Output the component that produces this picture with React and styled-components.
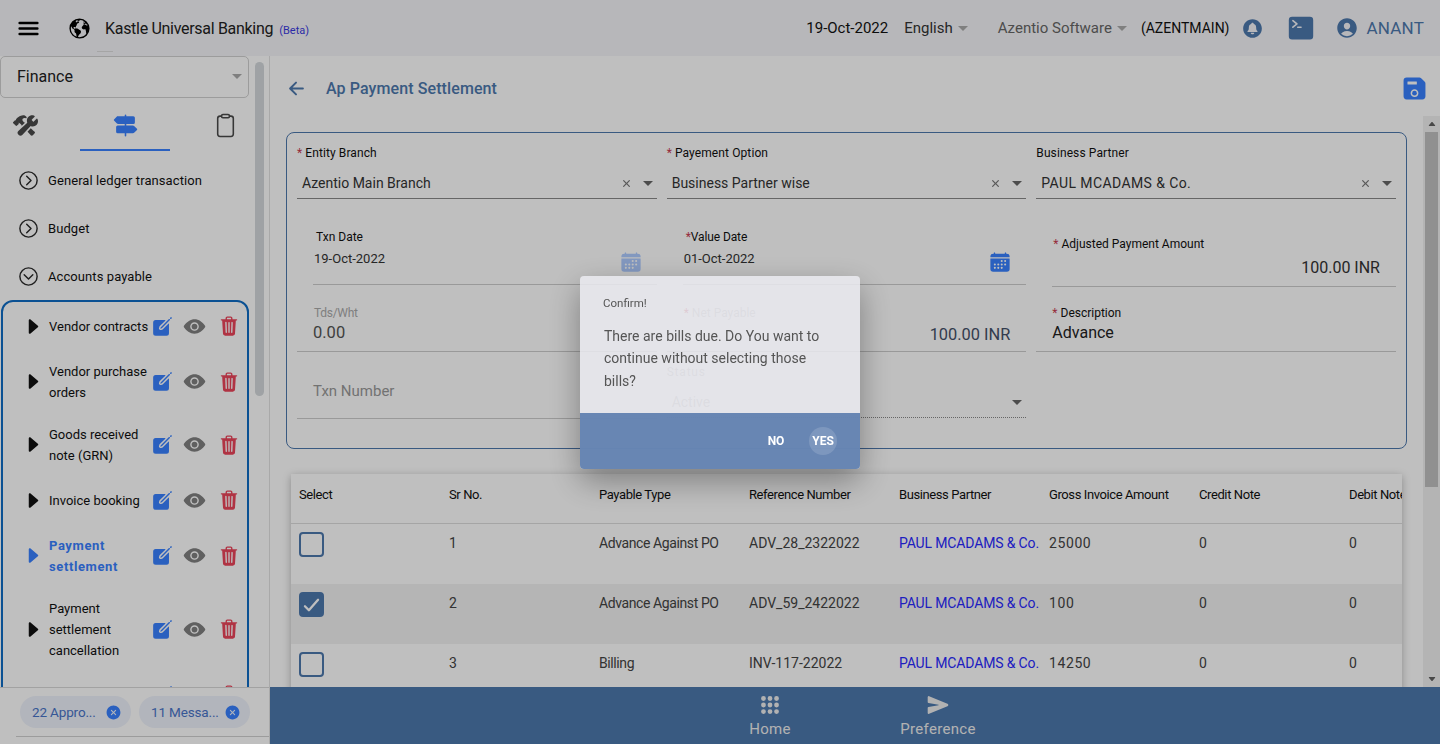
import React from "react";
import styled, { createGlobalStyle } from "styled-components";
import {
  IoMenu,
  IoEarth,
  IoNotificationsCircle,
  IoTerminal,
  IoPersonCircle,
  IoArrowBack,
  IoSave,
  IoCalendar,
  IoConstruct,
  IoTrailSign,
  IoClipboardOutline,
  IoChevronForwardCircleOutline,
  IoChevronDownCircleOutline,
  IoCaretForward,
  IoCaretDown,
  IoCaretUp,
  IoCreate,
  IoEye,
  IoTrash,
  IoCloseCircle,
  IoClose,
  IoApps,
  IoSend,
  IoCheckmark,
} from "react-icons/io5";

const blue = "#4d78ad";
const primary = "#3880ff";

const GlobalStyle = createGlobalStyle`
  html, body {
    margin: 0;
    height: 100%;
    overflow: hidden;
    background: #fff;
    font-family: Roboto, "Liberation Sans", sans-serif;
    color: #000;
  }
  * {
    box-sizing: border-box;
  }
`;

const Page = styled.div`
  height: 744px;
  display: flex;
  flex-direction: column;
  overflow: hidden;
`;

const Header = styled.header`
  position: relative;
  flex: 0 0 56px;
  display: flex;
  align-items: center;
  background: #f5f5f8;
  padding: 0 16px 0 14.5px;
`;

const HeaderTick = styled.span`
  position: absolute;
  left: 97px;
  top: 51px;
  width: 16px;
  height: 1px;
  background: #ddd;
`;

const Title = styled.span`
  margin-left: 14.5px;
  font-size: 16px;
  letter-spacing: -0.3px;
  color: #222;
`;

const Beta = styled.span`
  margin-left: 6px;
  font-size: 11px;
  letter-spacing: 0;
  color: #3a3ae0;
`;

const Spacer = styled.div`
  flex: 1;
`;

const HeadText = styled.span`
  margin-left: ${(p) => p.$ml || 0}px;
  font-size: ${(p) => p.$size || 14}px;
  color: ${(p) => p.$color || "#111"};
  letter-spacing: ${(p) => p.$track || 0}px;
`;

const HeadIcon = styled.span`
  display: flex;
  margin-left: ${(p) => p.$ml || 0}px;
  color: ${(p) => p.$color || "#000"};
  font-size: ${(p) => p.$size || 22}px;
`;

const Caret = styled.span`
  margin-left: ${(p) => p.$ml || 5}px;
  width: 0;
  height: 0;
  border-left: 5px solid transparent;
  border-right: 5px solid transparent;
  border-top: 5px solid #aaa;
`;

const Body = styled.div`
  flex: 1;
  min-height: 0;
  display: flex;
`;

const Sidebar = styled.aside`
  flex: 0 0 270px;
  display: flex;
  flex-direction: column;
  border-right: 1px solid #e2e2e2;
  background: #fff;
`;

const SideScroll = styled.div`
  flex: 1;
  min-height: 0;
  overflow: hidden;
  display: flex;
`;

const SideColumn = styled.div`
  flex: 0 0 250px;
  width: 250px;
`;

const SideThumbTrack = styled.div`
  padding: 6px 0 0 5px;
`;

const SideThumb = styled.div`
  width: 9px;
  height: 334px;
  border-radius: 5px;
  background: #d4d9dc;
`;

const ModuleSelect = styled.div`
  height: 42px;
  width: 249px;
  display: flex;
  align-items: center;
  justify-content: space-between;
  padding: 0 6px 2px 16px;
  border: 1px solid #d0d0d0;
  border-radius: 5px;
  font-size: 16px;
  color: #222;
`;

const Tabs = styled.div`
  display: grid;
  grid-template-columns: 50px 90px 50px;
  justify-content: space-between;
  height: 53px;
`;

const Tab = styled.div`
  display: flex;
  align-items: center;
  justify-content: center;
  font-size: 25px;
  padding-top: 4px;
  color: ${(p) => (p.$active ? primary : "#4a4a4a")};
  border-bottom: 2px solid ${(p) => (p.$active ? primary : "transparent")};
`;

const Group = styled.div`
  display: flex;
  align-items: center;
  gap: 8px;
  height: 48px;
  padding-left: 17px;
  font-size: 13px;
  letter-spacing: 0.08px;
  color: #111;

  svg {
    font-size: 23px;
    flex: none;
    color: #2a2a2a;
  }
`;

const GroupList = styled.div`
  margin-top: 5px;
`;

const SubBox = styled.div`
  margin: 0 1px;
  border: 2px solid #0f6cc4;
  border-radius: 12px;
`;

const Item = styled.div`
  display: flex;
  align-items: center;
  min-height: 48px;
  padding: 10.5px 0 10.5px 19px;
`;

const ItemCaret = styled.span`
  display: flex;
  font-size: 23px;
  color: ${(p) => (p.$active ? primary : "#111")};
`;

const ItemName = styled.div`
  flex: 0 0 102px;
  width: 102px;
  margin-left: 4px;
  font-size: 13px;
  line-height: 21px;
  font-weight: ${(p) => (p.$active ? 700 : 400)};
  letter-spacing: ${(p) => (p.$active ? 0.6 : 0)}px;
  color: ${(p) => (p.$active ? primary : "#111")};
  white-space: pre;
`;

const ItemActions = styled.div`
  display: flex;
  align-items: center;
`;

const ActionIcon = styled.span`
  display: flex;
  margin-left: ${(p) => p.$ml || 0}px;
  color: ${(p) => p.$color};
  font-size: ${(p) => p.$size}px;
`;

const ChipBar = styled.div`
  flex: 0 0 57px;
  padding: 8px 0 0 20px;
  position: relative;
  display: flex;
  gap: 8px;
  align-items: flex-start;
  border-top: 1px solid #d8d8d8;
  background: #fff;
`;

const ChipRule = styled.div`
  position: absolute;
  left: 16px;
  right: 0;
  top: 48px;
  height: 1px;
  background: #d0d0d0;
`;

const Chip = styled.div`
  width: 111px;
  height: 32px;
  border-radius: 16px;
  background: #eef2fb;
  display: flex;
  align-items: center;
  justify-content: space-between;
  padding: 0 9px 0 12px;
  font-size: 13.5px;
  letter-spacing: -0.15px;
  color: #4a74c8;
  white-space: nowrap;

  svg {
    font-size: 17px;
    flex: none;
    color: ${primary};
  }
`;

const Main = styled.main`
  flex: 1;
  min-width: 0;
  display: flex;
  flex-direction: column;
  background: #fff;
`;

const TitleRow = styled.div`
  flex: 0 0 60px;
  display: flex;
  align-items: center;
  padding: 4px 13px 0 16px;
  color: ${blue};

  h1 {
    margin: 0 0 0 19px;
    font-size: 16px;
    font-weight: 500;
    letter-spacing: 0.1px;
  }
`;

const SaveIcon = styled.span`
  display: flex;
  font-size: 25px;
  color: ${primary};
`;

const ContentRow = styled.div`
  flex: 1;
  min-height: 0;
  display: flex;
`;

const Content = styled.div`
  flex: 1;
  min-width: 0;
  overflow: hidden;
  padding: 16px 16px 0;
`;

const ScrollTrack = styled.div`
  flex: 0 0 17px;
  display: flex;
  flex-direction: column;
  align-items: center;
  background: #f1f1f1;
  padding: 0 2px;
  color: #606060;
  font-size: 10px;

  svg {
    flex: 0 0 16px;
    margin: 0;
  }
`;

const ScrollThumb = styled.div`
  flex: 0 0 355px;
  width: 100%;
  background: #c1c1c1;
`;

const Fill = styled.div`
  flex: 1;
`;

const FormCard = styled.section`
  border: 1px solid ${blue};
  border-radius: 8px;
  height: 317px;
  padding: 10px 10px 0;
  display: grid;
  grid-template-columns: repeat(3, 1fr);
  grid-template-rows: 56px 88px 65px 67px;
  column-gap: 10px;
`;

const Field = styled.div`
  height: ${(p) => p.$h}px;
  margin-left: ${(p) => p.$ml || 0}px;
  padding: ${(p) => p.$top || 0}px 0 0 ${(p) => p.$pl || 0}px;
  border-bottom: 1px ${(p) => (p.$dotted ? "dotted" : "solid")} ${(p) => p.$line || "#ccc"};
`;

const Label = styled.div`
  font-size: 12px;
  line-height: ${(p) => p.$lh || 20}px;
  color: ${(p) => p.$color || "#111"};
  padding-left: ${(p) => p.$pl || 0}px;
  letter-spacing: ${(p) => p.$track || 0}px;
`;

const Star = styled.span`
  color: #c93a4f;
  margin-right: ${(p) => p.$mr ?? 3}px;
`;

const SelectValue = styled.div`
  display: flex;
  align-items: center;
  margin-top: 5px;
  padding: 0 4px 0 5px;
  height: 30px;
  font-size: 14px;
  color: #333;

  span:first-child {
    flex: 1;
    letter-spacing: ${(p) => p.$track || 0}px;
  }
`;

const ClearMark = styled.span`
  display: flex;
  font-size: 13px;
  color: #777;
  margin-right: 10px;
`;

const DownCaret = styled.span`
  width: 0;
  height: 0;
  border-left: 5px solid transparent;
  border-right: 5px solid transparent;
  border-top: 5px solid #666;
`;

const DateRow = styled.div`
  display: flex;
  justify-content: space-between;
  align-items: flex-start;
  margin-top: 5px;
  padding-right: 15px;
  font-size: 13px;
  line-height: 16px;
  color: #333;
`;

const CalendarIcon = styled.span`
  display: flex;
  font-size: 22px;
  color: ${primary};
  opacity: ${(p) => (p.$faded ? 0.4 : 1)};
`;

const Value = styled.div`
  font-size: ${(p) => p.$size || 16}px;
  line-height: 20px;
  margin-top: ${(p) => p.$mt || 0}px;
  padding-right: ${(p) => p.$pr || 0}px;
  padding-left: ${(p) => p.$pl || 0}px;
  text-align: ${(p) => p.$align || "left"};
  color: ${(p) => p.$color || "#333"};
`;

const StatusRow = styled.div`
  display: flex;
  align-items: center;
  justify-content: space-between;
  margin-top: 11px;
  padding: 0 4px 0 5px;
  font-size: 14px;
  color: #bbb;
  line-height: 20px;
`;

const TableCard = styled.section`
  margin: 25px 5px 0;
  background: #fff;
  box-shadow: 0 2px 8px rgba(0, 0, 0, 0.28);
  overflow: hidden;
`;

const Row = styled.div`
  display: flex;
  height: ${(p) => p.$h || 60}px;
  background: ${(p) => (p.$shade ? "#f2f2f2" : "transparent")};
  border-bottom: ${(p) => (p.$head ? "1px solid #dcdcdc" : "none")};
`;

const Cell = styled.div`
  flex: 0 0 150px;
  padding: ${(p) => p.$top}px 0 0 8px;
  font-size: ${(p) => p.$size || 14}px;
  line-height: 20px;
  white-space: nowrap;
  letter-spacing: ${(p) => p.$track || 0}px;
  color: ${(p) => p.$color || "#444"};
`;

const Checkbox = styled.div`
  width: 25px;
  height: 25px;
  border: 2px solid ${blue};
  border-radius: 4px;
  background: ${(p) => (p.$on ? blue : "transparent")};
  color: #fff;
  display: flex;
  align-items: center;
  justify-content: center;
  font-size: 24px;

  svg * {
    stroke-width: 56px;
  }
`;

const Footer = styled.footer`
  flex: 0 0 57px;
  display: flex;
  justify-content: center;
  gap: 92px;
  padding-right: 2px;
  background: ${blue};
  color: #eee;
`;

const FootItem = styled.div`
  width: 76px;
  display: flex;
  flex-direction: column;
  align-items: center;
  padding-top: 7px;
  font-size: 15px;
  letter-spacing: 0.3px;

  svg {
    font-size: 22px;
    margin-bottom: 4px;
    display: block;
  }
`;

const Backdrop = styled.div`
  position: fixed;
  inset: 0;
  background: rgba(0, 0, 0, 0.25);
  display: flex;
  align-items: center;
  justify-content: center;
`;

const Dialog = styled.div`
  width: 280px;
  height: 193px;
  border-radius: 4px;
  overflow: hidden;
  display: flex;
  flex-direction: column;
  background: rgba(235, 235, 241, 0.84);
  box-shadow: 0 12px 32px rgba(0, 0, 0, 0.34);
`;

const DialogBody = styled.div`
  flex: 1;
  padding: 19px 24px 0 24px;
  color: #555;

  small {
    display: block;
    margin-left: -1px;
    font-size: 11.5px;
    line-height: 16px;
  }

  p {
    margin: 14px 0 0;
    font-size: 14px;
    line-height: 22.5px;
  }
`;

const DialogBar = styled.div`
  flex: 0 0 56px;
  display: flex;
  align-items: center;
  justify-content: flex-end;
  padding: 0 23px 0 0;
  background: rgba(82, 118, 170, 0.85);
  font-size: 12px;
  font-weight: 700;
  color: #fff;
`;

const BarButton = styled.span`
  width: 28px;
  height: 28px;
  margin-left: ${(p) => p.$ml || 0}px;
  border-radius: 50%;
  display: flex;
  align-items: center;
  justify-content: center;
  background: ${(p) => (p.$glow ? "rgba(255, 255, 255, 0.14)" : "transparent")};
`;

const items = [
  { name: "Vendor contracts" },
  { name: "Vendor purchase\norders" },
  { name: "Goods received\nnote (GRN)" },
  { name: "Invoice booking" },
  { name: "Payment\nsettlement", active: true },
  { name: "Payment\nsettlement\ncancellation" },
  { name: "" },
];

const columns = [
  "Select",
  "Sr No.",
  "Payable Type",
  "Reference Number",
  "Business Partner",
  "Gross Invoice Amount",
  "Credit Note",
  "Debit Note",
];

const rows = [
  { sr: 1, type: "Advance Against PO", ref: "ADV_28_2322022", amount: "25000" },
  { sr: 2, type: "Advance Against PO", ref: "ADV_59_2422022", amount: "100", checked: true },
  { sr: 3, type: "Billing", ref: "INV-117-22022", amount: "14250" },
];

const SelectField = ({ label, value, required, track }) => (
  <Field $h={56} $line="#888">
    <Label $track={0.1}>
      {required && <Star>*</Star>}
      {label}
    </Label>
    <SelectValue $track={track}>
      <span>{value}</span>
      <ClearMark>
        <IoClose />
      </ClearMark>
      <DownCaret />
    </SelectValue>
  </Field>
);

const App = () => {
  return (
    <Page>
      <GlobalStyle />
      <Header>
        <HeadIcon $size={27}>
          <IoMenu />
        </HeadIcon>
        <HeadIcon $ml={26} $size={23}>
          <IoEarth />
        </HeadIcon>
        <Title>
          Kastle Universal Banking
          <Beta>(Beta)</Beta>
        </Title>
        <HeaderTick />
        <Spacer />
        <HeadText $size={15}>19-Oct-2022</HeadText>
        <HeadText $ml={16} $size={15} $color="#333">
          English
        </HeadText>
        <Caret />
        <HeadText $ml={30} $size={15} $color="#666">
          Azentio Software
        </HeadText>
        <Caret />
        <HeadText $ml={14} $size={14}>
          (AZENTMAIN)
        </HeadText>
        <HeadIcon $ml={11.5} $size={23} $color={blue}>
          <IoNotificationsCircle />
        </HeadIcon>
        <HeadIcon $ml={23.5} $size={26} $color={blue}>
          <IoTerminal />
        </HeadIcon>
        <HeadIcon $ml={21} $size={24} $color={blue}>
          <IoPersonCircle />
        </HeadIcon>
        <HeadText $ml={8} $size={17} $color={blue} $track={0.2}>
          ANANT
        </HeadText>
      </Header>

      <Body>
        <Sidebar>
          <SideScroll>
            <SideColumn>
              <ModuleSelect>
                Finance
                <Caret />
              </ModuleSelect>
              <Tabs>
                <Tab>
                  <IoConstruct />
                </Tab>
                <Tab $active>
                  <IoTrailSign />
                </Tab>
                <Tab>
                  <IoClipboardOutline />
                </Tab>
              </Tabs>
              <GroupList>
                <Group>
                  <IoChevronForwardCircleOutline />
                  General ledger transaction
                </Group>
                <Group>
                  <IoChevronForwardCircleOutline />
                  Budget
                </Group>
                <Group>
                  <IoChevronDownCircleOutline />
                  Accounts payable
                </Group>
              </GroupList>
              <SubBox>
                {items.map((item, i) => (
                  <Item key={i}>
                    <ItemCaret $active={item.active}>
                      <IoCaretForward />
                    </ItemCaret>
                    <ItemName $active={item.active}>{item.name}</ItemName>
                    <ItemActions>
                      <ActionIcon $size={23} $color={primary}>
                        <IoCreate />
                      </ActionIcon>
                      <ActionIcon $ml={9} $size={23} $color="#808080">
                        <IoEye />
                      </ActionIcon>
                      <ActionIcon $ml={12} $size={22} $color="#eb445a">
                        <IoTrash />
                      </ActionIcon>
                    </ItemActions>
                  </Item>
                ))}
              </SubBox>
            </SideColumn>
            <SideThumbTrack>
              <SideThumb />
            </SideThumbTrack>
          </SideScroll>
          <ChipBar>
            <Chip>
              22 Appro...
              <IoCloseCircle />
            </Chip>
            <Chip>
              11 Messa...
              <IoCloseCircle />
            </Chip>
            <ChipRule />
          </ChipBar>
        </Sidebar>

        <Main>
          <TitleRow>
            <IoArrowBack size={21} />
            <h1>Ap Payment Settlement</h1>
            <Spacer />
            <SaveIcon>
              <IoSave />
            </SaveIcon>
          </TitleRow>

          <ContentRow>
            <Content>
              <FormCard>
                <SelectField label="Entity Branch" value="Azentio Main Branch" required />
                <SelectField label="Payement Option" value="Business Partner wise" required />
                <SelectField label="Business Partner" value="PAUL MCADAMS & Co." track={0.4} />

                <Field $h={86} $ml={16} $top={29} $pl={1}>
                  <Label $lh={18} $pl={2}>
                    Txn Date
                  </Label>
                  <DateRow>
                    19-Oct-2022
                    <CalendarIcon $faded>
                      <IoCalendar />
                    </CalendarIcon>
                  </DateRow>
                </Field>
                <Field $h={86} $ml={16} $top={29} $pl={1}>
                  <Label $lh={18} $pl={2} $track={-0.1}>
                    <Star $mr={0}>*</Star>Value Date
                  </Label>
                  <DateRow>
                    01-Oct-2022
                    <CalendarIcon>
                      <IoCalendar />
                    </CalendarIcon>
                  </DateRow>
                </Field>
                <Field $h={88} $ml={16} $top={37}>
                  <Label $lh={16} $pl={1}>
                    <Star>*</Star>Adjusted Payment Amount
                  </Label>
                  <Value $mt={6} $pr={16} $align="right">
                    100.00 INR
                  </Value>
                </Field>

                <Field $h={65} $top={17} $pl={16}>
                  <Label $lh={18} $color="#aaa" $pl={1} $track={-0.3}>
                    Tds/Wht
                  </Label>
                  <Value $mt={1} $size={16.5} $color="#555">
                    0.00
                  </Value>
                </Field>
                <Field $h={65} $top={17} $pl={17}>
                  <Label $lh={18} $color="#bbb">
                    <Star>*</Star>Net Payable
                  </Label>
                  <Value $mt={3} $pr={16} $size={16.4} $align="right" $color="#445068">
                    100.00 INR
                  </Value>
                </Field>
                <Field $h={65} $top={17} $pl={16}>
                  <Label $lh={18}>
                    <Star>*</Star>Description
                  </Label>
                  <Value $mt={1} $color="#222">
                    Advance
                  </Value>
                </Field>

                <Field $h={67} $top={29} $pl={16}>
                  <Value $size={15} $color="#999">
                    Txn Number
                  </Value>
                </Field>
                <Field $h={66} $top={11} $dotted $line="#888">
                  <Label $lh={18} $color="#bbb" $track={0.8}>
                    Status
                  </Label>
                  <StatusRow>
                    Active
                    <DownCaret />
                  </StatusRow>
                </Field>
              </FormCard>

              <TableCard>
                <Row $h={50} $head>
                  {columns.map((col) => (
                    <Cell key={col} $top={11} $size={13} $track={-0.4} $color="#111">
                      {col}
                    </Cell>
                  ))}
                </Row>
                {rows.map((row) => (
                  <Row key={row.sr} $shade={row.checked}>
                    <Cell $top={8}>
                      <Checkbox $on={row.checked}>{row.checked && <IoCheckmark />}</Checkbox>
                    </Cell>
                    <Cell $top={9}>{row.sr}</Cell>
                    <Cell $top={9} $track={-0.4}>
                      {row.type}
                    </Cell>
                    <Cell $top={9}>{row.ref}</Cell>
                    <Cell $top={9} $track={-0.15} $color="#2a2aff">
                      PAUL MCADAMS &amp; Co.
                    </Cell>
                    <Cell $top={9} $track={0.6}>
                      {row.amount}
                    </Cell>
                    <Cell $top={9}>0</Cell>
                    <Cell $top={9}>0</Cell>
                  </Row>
                ))}
              </TableCard>
            </Content>
            <ScrollTrack>
              <IoCaretUp />
              <ScrollThumb />
              <Fill />
              <IoCaretDown />
            </ScrollTrack>
          </ContentRow>

          <Footer>
            <FootItem>
              <IoApps />
              Home
            </FootItem>
            <FootItem>
              <IoSend />
              Preference
            </FootItem>
          </Footer>
        </Main>
      </Body>

      <Backdrop>
        <Dialog>
          <DialogBody>
            <small>Confirm!</small>
            <p>There are bills due. Do You want to continue without selecting those bills?</p>
          </DialogBody>
          <DialogBar>
            <BarButton>NO</BarButton>
            <BarButton $ml={19} $glow>
              YES
            </BarButton>
          </DialogBar>
        </Dialog>
      </Backdrop>
    </Page>
  );
};

export default App;
